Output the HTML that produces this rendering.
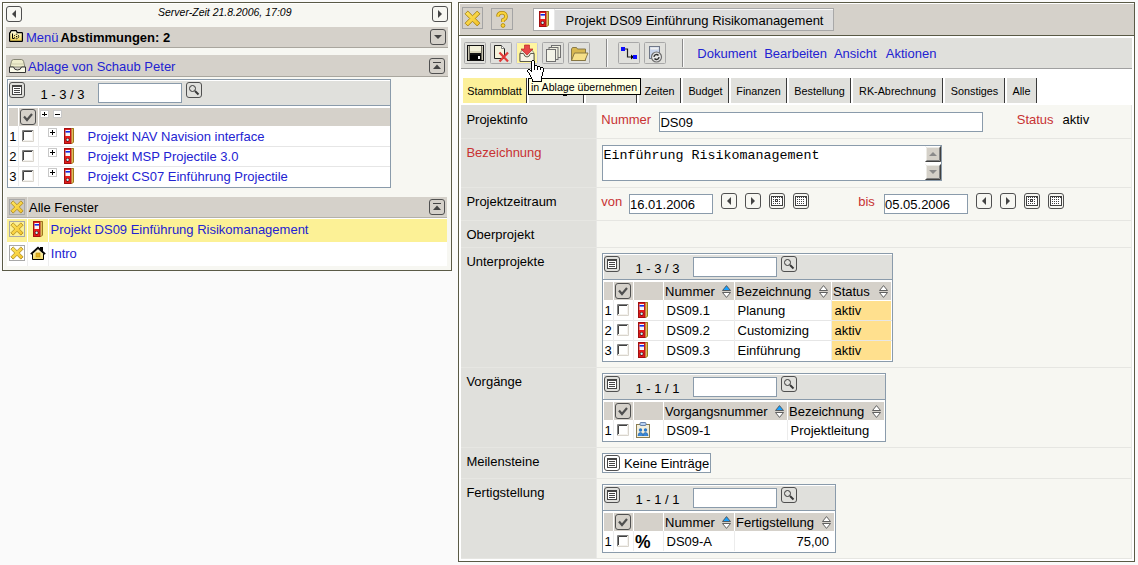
<!DOCTYPE html><html><head><meta charset="utf-8"><style>
html,body{margin:0;padding:0;}
body{width:1138px;height:565px;position:relative;overflow:hidden;background:#fafafa;font-family:"Liberation Sans",sans-serif;}
div{position:absolute;box-sizing:content-box;}
svg{position:absolute;overflow:visible;}
.t{white-space:nowrap;line-height:1;}
.m{white-space:nowrap;line-height:1;font-family:"Liberation Mono",monospace;}
</style></head><body>
<div style="left:2px;top:2px;width:448px;height:267px;border:1px solid #5a5a46;background:#f7f7f2;"></div>
<div style="left:3px;top:3px;width:448px;height:1px;background:#fff"></div>
<div style="left:3px;top:3px;width:1px;height:267px;background:#fff"></div>
<svg style="left:6px;top:6px" width="16" height="16" viewBox="0 0 16 16"><rect x="0.5" y="0.5" width="15" height="15" rx="2.5" ry="2.5" fill="none" stroke="#505050" stroke-width="1"/><path d="M10 4 V12 L6 8 Z" fill="#444"/></svg>
<svg style="left:432px;top:6px" width="16" height="16" viewBox="0 0 16 16"><rect x="0.5" y="0.5" width="15" height="15" rx="2.5" ry="2.5" fill="none" stroke="#505050" stroke-width="1"/><path d="M6 4 V12 L10 8 Z" fill="#444"/></svg>
<div class="t" style="left:158px;top:7px;font-size:10.5px;color:#000;font-style:italic;">Server-Zeit 21.8.2006, 17:09</div>
<div style="left:6px;top:27px;width:442px;height:20px;background:#d5d1ca"></div>
<div style="left:6px;top:47px;width:442px;height:1px;background:#a9a69e"></div>
<svg style="left:9px;top:30px" width="14" height="12" viewBox="0 0 14 12"><defs><linearGradient id="fg" x1="0" y1="0" x2="0" y2="1"><stop offset="0" stop-color="#fffef0"/><stop offset="0.5" stop-color="#fbec98"/><stop offset="1" stop-color="#f0d050"/></linearGradient></defs><path d="M0.6 11 V3.2 Q0.6 2.6 1.2 2.6 L2.2 0.6 H7.2 L8.2 2.6 H12.8 Q13.4 2.6 13.4 3.2 V11 Q13.4 11.4 12.8 11.4 H1.2 Q0.6 11.4 0.6 11 Z" fill="url(#fg)" stroke="#000" stroke-width="1.2"/><path d="M3.5 3.5 V8.5 H5.5" stroke="#000" stroke-width="1" fill="none"/><circle cx="7.5" cy="6.5" r="2.2" fill="none" stroke="#000" stroke-width="1" stroke-dasharray="1.2 1"/><rect x="7" y="6" width="1.2" height="1.2" fill="#000"/></svg>
<div class="t" style="left:26px;top:31px;font-size:13px;color:#2323d2;">Menü</div>
<div class="t" style="left:60.4px;top:31px;font-size:13px;color:#000;font-weight:bold;">Abstimmungen: 2</div>
<svg style="left:430px;top:29px" width="16" height="16" viewBox="0 0 16 16"><rect x="0.5" y="0.5" width="15" height="15" rx="2.5" ry="2.5" fill="none" stroke="#505050" stroke-width="1"/><path d="M4 6 H12 L8 10 Z" fill="#444"/></svg>
<div style="left:6px;top:55px;width:442px;height:21px;background:#d5d1ca"></div>
<div style="left:6px;top:76px;width:442px;height:1px;background:#a9a69e"></div>
<svg style="left:9px;top:58px" width="17" height="15" viewBox="0 0 17 15"><path d="M4.5 1.5 H12.5 Q14 1.5 14.6 3.5 L15.8 9 H1.2 L2.4 3.5 Q3 1.5 4.5 1.5 Z" fill="#efedcc" stroke="#707060" stroke-width="0.8"/><path d="M3 6 H14" stroke="#d8d6b8" stroke-width="1.5"/><path d="M0.5 9 H4.5 Q5.2 12 8.5 12 Q11.8 12 12.5 9 H16.5 V14.5 H0.5 Z" fill="#fbfbea" stroke="#202020" stroke-width="0.9"/></svg>
<div class="t" style="left:28px;top:60px;font-size:13px;color:#2323d2;">Ablage von Schaub Peter</div>
<svg style="left:429px;top:58px" width="16" height="16" viewBox="0 0 16 16"><rect x="0.5" y="0.5" width="15" height="15" rx="2.5" ry="2.5" fill="none" stroke="#505050" stroke-width="1"/><rect x="4" y="4" width="8" height="1" fill="#444"/><path d="M4 11 H12 L8 6.5 Z" fill="#444"/></svg>
<div style="left:7px;top:79px;width:382px;height:107px;border:1px solid #8a9bab;background:#fff;"></div>
<div style="left:8px;top:80px;width:382px;height:25px;background:#e0e0dc"></div>
<div style="left:8px;top:80px;width:382px;height:1px;background:#fff"></div>
<div style="left:8px;top:80px;width:1px;height:25px;background:#fff"></div>
<div style="left:8px;top:105px;width:382px;height:1px;background:#8a9bab"></div>
<svg style="left:9px;top:82px" width="16" height="16" viewBox="0 0 16 16"><rect x="0.5" y="0.5" width="15" height="15" rx="2.5" ry="2.5" fill="none" stroke="#505050" stroke-width="1"/><rect x="3.5" y="3.5" width="9" height="9" fill="#fff" stroke="#444"/><rect x="3" y="3" width="10" height="2" fill="#444"/><path d="M5 6.5 H11 M5 8.5 H11 M5 10.5 H11" stroke="#444" stroke-width="1"/></svg>
<div class="t" style="left:40.5px;top:88px;font-size:13px;color:#000;">1 - 3 / 3</div>
<div style="left:98px;top:83px;width:82px;height:18px;border:1px solid #8a9bab;background:#fff;"></div>
<svg style="left:186px;top:82px" width="16" height="16" viewBox="0 0 16 16"><rect x="0.5" y="0.5" width="15" height="15" rx="2.5" ry="2.5" fill="none" stroke="#505050" stroke-width="1"/><circle cx="6.5" cy="6.5" r="3" fill="none" stroke="#383838" stroke-width="1"/><path d="M9 9 L12.5 12.5" stroke="#383838" stroke-width="2"/></svg>
<div style="left:9px;top:108px;width:9px;height:18px;background:#d5d1ca"></div>
<div style="left:19px;top:108px;width:19px;height:18px;background:#d5d1ca"></div>
<div style="left:39px;top:108px;width:351px;height:18px;background:#d5d1ca"></div>
<svg style="left:20px;top:109px" width="16" height="16" viewBox="0 0 16 16"><rect x="0.5" y="0.5" width="15" height="15" rx="2.5" ry="2.5" fill="none" stroke="#505050" stroke-width="1"/><path d="M4 7.5 L7 11 L12 5" stroke="#505050" stroke-width="2.2" fill="none"/></svg>
<svg style="left:40px;top:110px" width="9" height="8" viewBox="0 0 9 8"><rect x="0.5" y="0.5" width="8" height="7" fill="#fff" stroke="#c8c8c8"/><rect x="2" y="4" width="5" height="1" fill="#000"/><rect x="4" y="2" width="1" height="4" fill="#000"/></svg>
<svg style="left:53px;top:110px" width="9" height="8" viewBox="0 0 9 8"><rect x="0.5" y="0.5" width="8" height="7" fill="#fff" stroke="#c8c8c8"/><rect x="2" y="4" width="5" height="1" fill="#000"/></svg>
<div style="left:18px;top:126px;width:1px;height:20px;background:#ececec"></div>
<div style="left:38px;top:126px;width:1px;height:20px;background:#ececec"></div>
<div class="t" style="left:9.2px;top:130px;font-size:13px;color:#000;">1</div>
<svg style="left:22px;top:130px" width="12" height="12" viewBox="0 0 12 12"><rect x="0" y="0" width="12" height="12" fill="#fff"/><path d="M0.5 12 V0.5 H12" stroke="#808080" stroke-width="1" fill="none"/><path d="M1.5 11 V1.5 H11" stroke="#404040" stroke-width="1" fill="none"/><path d="M11.5 0 V11.5 H0" stroke="#d8d4cc" stroke-width="1" fill="none"/><path d="M10.5 1 V10.5 H1" stroke="#f4f2ee" stroke-width="1" fill="none"/></svg>
<svg style="left:48px;top:128px" width="9" height="9" viewBox="0 0 9 9"><rect x="0.5" y="0.5" width="8" height="8" fill="#fff" stroke="#c8c8c8"/><rect x="2" y="4" width="5" height="1" fill="#000"/><rect x="4" y="2" width="1" height="5" fill="#000"/></svg>
<svg style="left:64px;top:128px" width="10" height="16" viewBox="0 0 10 16"><path d="M7 1 L8 0 H10 V14 L8 16 H7 Z" fill="#d8b44a"/><rect x="7" y="1" width="1" height="14" fill="#f2dc80" shape-rendering="crispEdges"/><rect x="8" y="1" width="1" height="14" fill="#e0c058" shape-rendering="crispEdges"/><path d="M9.5 0.5 V14 L8 15.5" stroke="#9a7a20" stroke-width="1" fill="none"/><path d="M7.5 0.5 H9.5" stroke="#9a7a20" stroke-width="1"/><rect x="0" y="0" width="7" height="16" fill="#e41c1c"/><rect x="0.5" y="0.5" width="6.5" height="15" fill="none" stroke="#a01010" stroke-width="1"/><rect x="1.5" y="2" width="4.5" height="6" fill="#f6f6f6"/><rect x="1.5" y="3" width="4.5" height="1.6" fill="#1428e0"/><circle cx="3.6" cy="11.8" r="1.9" fill="#500"/><circle cx="3.6" cy="11.8" r="1.2" fill="#c8f4fa"/></svg>
<div class="t" style="left:87.6px;top:130px;font-size:13px;color:#2323d2;">Projekt NAV Navision interface</div>
<div style="left:8px;top:146px;width:382px;height:1px;background:#e6e6e6"></div>
<div style="left:18px;top:146px;width:1px;height:20px;background:#ececec"></div>
<div style="left:38px;top:146px;width:1px;height:20px;background:#ececec"></div>
<div class="t" style="left:9.2px;top:150px;font-size:13px;color:#000;">2</div>
<svg style="left:22px;top:150px" width="12" height="12" viewBox="0 0 12 12"><rect x="0" y="0" width="12" height="12" fill="#fff"/><path d="M0.5 12 V0.5 H12" stroke="#808080" stroke-width="1" fill="none"/><path d="M1.5 11 V1.5 H11" stroke="#404040" stroke-width="1" fill="none"/><path d="M11.5 0 V11.5 H0" stroke="#d8d4cc" stroke-width="1" fill="none"/><path d="M10.5 1 V10.5 H1" stroke="#f4f2ee" stroke-width="1" fill="none"/></svg>
<svg style="left:48px;top:148px" width="9" height="9" viewBox="0 0 9 9"><rect x="0.5" y="0.5" width="8" height="8" fill="#fff" stroke="#c8c8c8"/><rect x="2" y="4" width="5" height="1" fill="#000"/><rect x="4" y="2" width="1" height="5" fill="#000"/></svg>
<svg style="left:64px;top:148px" width="10" height="16" viewBox="0 0 10 16"><path d="M7 1 L8 0 H10 V14 L8 16 H7 Z" fill="#d8b44a"/><rect x="7" y="1" width="1" height="14" fill="#f2dc80" shape-rendering="crispEdges"/><rect x="8" y="1" width="1" height="14" fill="#e0c058" shape-rendering="crispEdges"/><path d="M9.5 0.5 V14 L8 15.5" stroke="#9a7a20" stroke-width="1" fill="none"/><path d="M7.5 0.5 H9.5" stroke="#9a7a20" stroke-width="1"/><rect x="0" y="0" width="7" height="16" fill="#e41c1c"/><rect x="0.5" y="0.5" width="6.5" height="15" fill="none" stroke="#a01010" stroke-width="1"/><rect x="1.5" y="2" width="4.5" height="6" fill="#f6f6f6"/><rect x="1.5" y="3" width="4.5" height="1.6" fill="#1428e0"/><circle cx="3.6" cy="11.8" r="1.9" fill="#500"/><circle cx="3.6" cy="11.8" r="1.2" fill="#c8f4fa"/></svg>
<div class="t" style="left:87.6px;top:150px;font-size:13px;color:#2323d2;">Projekt MSP Projectile 3.0</div>
<div style="left:8px;top:166px;width:382px;height:1px;background:#e6e6e6"></div>
<div style="left:18px;top:166px;width:1px;height:20px;background:#ececec"></div>
<div style="left:38px;top:166px;width:1px;height:20px;background:#ececec"></div>
<div class="t" style="left:9.2px;top:170px;font-size:13px;color:#000;">3</div>
<svg style="left:22px;top:170px" width="12" height="12" viewBox="0 0 12 12"><rect x="0" y="0" width="12" height="12" fill="#fff"/><path d="M0.5 12 V0.5 H12" stroke="#808080" stroke-width="1" fill="none"/><path d="M1.5 11 V1.5 H11" stroke="#404040" stroke-width="1" fill="none"/><path d="M11.5 0 V11.5 H0" stroke="#d8d4cc" stroke-width="1" fill="none"/><path d="M10.5 1 V10.5 H1" stroke="#f4f2ee" stroke-width="1" fill="none"/></svg>
<svg style="left:48px;top:168px" width="9" height="9" viewBox="0 0 9 9"><rect x="0.5" y="0.5" width="8" height="8" fill="#fff" stroke="#c8c8c8"/><rect x="2" y="4" width="5" height="1" fill="#000"/><rect x="4" y="2" width="1" height="5" fill="#000"/></svg>
<svg style="left:64px;top:168px" width="10" height="16" viewBox="0 0 10 16"><path d="M7 1 L8 0 H10 V14 L8 16 H7 Z" fill="#d8b44a"/><rect x="7" y="1" width="1" height="14" fill="#f2dc80" shape-rendering="crispEdges"/><rect x="8" y="1" width="1" height="14" fill="#e0c058" shape-rendering="crispEdges"/><path d="M9.5 0.5 V14 L8 15.5" stroke="#9a7a20" stroke-width="1" fill="none"/><path d="M7.5 0.5 H9.5" stroke="#9a7a20" stroke-width="1"/><rect x="0" y="0" width="7" height="16" fill="#e41c1c"/><rect x="0.5" y="0.5" width="6.5" height="15" fill="none" stroke="#a01010" stroke-width="1"/><rect x="1.5" y="2" width="4.5" height="6" fill="#f6f6f6"/><rect x="1.5" y="3" width="4.5" height="1.6" fill="#1428e0"/><circle cx="3.6" cy="11.8" r="1.9" fill="#500"/><circle cx="3.6" cy="11.8" r="1.2" fill="#c8f4fa"/></svg>
<div class="t" style="left:87.6px;top:170px;font-size:13px;color:#2323d2;">Projekt CS07 Einführung Projectile</div>
<div style="left:7px;top:197px;width:440px;height:20px;background:#d5d1ca"></div>
<div style="left:7px;top:217px;width:440px;height:1px;background:#b4b1aa"></div>
<div style="left:7px;top:197px;width:20px;height:20px;background:#cdc9c2"></div>
<div style="left:27px;top:197px;width:1px;height:20px;background:#e6e4e0"></div>
<div style="left:9px;top:199px;width:14px;height:14px;border:1px solid #a8a8a8;background:transparent;"></div>
<svg style="left:10px;top:200px" width="14" height="14" viewBox="0 0 16 16"><defs><linearGradient id="xg10_200" x1="0" y1="0" x2="1" y2="1"><stop offset="0" stop-color="#ffe860"/><stop offset="1" stop-color="#f2c028"/></linearGradient></defs><path d="M1.00 3.60 L3.60 1.00 L8.00 5.40 L12.40 1.00 L15.00 3.60 L10.60 8.00 L15.00 12.40 L12.40 15.00 L8.00 10.60 L3.60 15.00 L1.00 12.40 L5.40 8.00 Z" fill="url(#xg10_200)" stroke="#a88418" stroke-width="0.9" stroke-linejoin="round"/></svg>
<div class="t" style="left:29px;top:201px;font-size:13px;color:#000;">Alle Fenster</div>
<svg style="left:429px;top:199px" width="16" height="16" viewBox="0 0 16 16"><rect x="0.5" y="0.5" width="15" height="15" rx="2.5" ry="2.5" fill="none" stroke="#505050" stroke-width="1"/><rect x="4" y="4" width="8" height="1" fill="#444"/><path d="M4 11 H12 L8 6.5 Z" fill="#444"/></svg>
<div style="left:7px;top:218px;width:440px;height:1px;background:#fff"></div>
<div style="left:7px;top:219px;width:440px;height:23px;background:#fcf196"></div>
<div style="left:27px;top:219px;width:1px;height:23px;background:#fff"></div>
<div style="left:48px;top:219px;width:1px;height:23px;background:#fff"></div>
<div style="left:9px;top:221px;width:14px;height:14px;border:1px solid #a8a8a8;background:transparent;"></div>
<svg style="left:10px;top:222px" width="14" height="14" viewBox="0 0 16 16"><defs><linearGradient id="xg10_222" x1="0" y1="0" x2="1" y2="1"><stop offset="0" stop-color="#ffe860"/><stop offset="1" stop-color="#f2c028"/></linearGradient></defs><path d="M1.00 3.60 L3.60 1.00 L8.00 5.40 L12.40 1.00 L15.00 3.60 L10.60 8.00 L15.00 12.40 L12.40 15.00 L8.00 10.60 L3.60 15.00 L1.00 12.40 L5.40 8.00 Z" fill="url(#xg10_222)" stroke="#a88418" stroke-width="0.9" stroke-linejoin="round"/></svg>
<svg style="left:33px;top:221px" width="10" height="16" viewBox="0 0 10 16"><path d="M7 1 L8 0 H10 V14 L8 16 H7 Z" fill="#d8b44a"/><rect x="7" y="1" width="1" height="14" fill="#f2dc80" shape-rendering="crispEdges"/><rect x="8" y="1" width="1" height="14" fill="#e0c058" shape-rendering="crispEdges"/><path d="M9.5 0.5 V14 L8 15.5" stroke="#9a7a20" stroke-width="1" fill="none"/><path d="M7.5 0.5 H9.5" stroke="#9a7a20" stroke-width="1"/><rect x="0" y="0" width="7" height="16" fill="#e41c1c"/><rect x="0.5" y="0.5" width="6.5" height="15" fill="none" stroke="#a01010" stroke-width="1"/><rect x="1.5" y="2" width="4.5" height="6" fill="#f6f6f6"/><rect x="1.5" y="3" width="4.5" height="1.6" fill="#1428e0"/><circle cx="3.6" cy="11.8" r="1.9" fill="#500"/><circle cx="3.6" cy="11.8" r="1.2" fill="#c8f4fa"/></svg>
<div class="t" style="left:50.5px;top:223px;font-size:13px;color:#2323d2;">Projekt DS09 Einführung Risikomanagement</div>
<div style="left:7px;top:242px;width:440px;height:24px;background:#fff"></div>
<div style="left:27px;top:242px;width:1px;height:24px;background:#eeeeee"></div>
<div style="left:48px;top:242px;width:1px;height:24px;background:#eeeeee"></div>
<div style="left:9px;top:245px;width:14px;height:14px;border:1px solid #a8a8a8;background:transparent;"></div>
<svg style="left:10px;top:246px" width="14" height="14" viewBox="0 0 16 16"><defs><linearGradient id="xg10_246" x1="0" y1="0" x2="1" y2="1"><stop offset="0" stop-color="#ffe860"/><stop offset="1" stop-color="#f2c028"/></linearGradient></defs><path d="M1.00 3.60 L3.60 1.00 L8.00 5.40 L12.40 1.00 L15.00 3.60 L10.60 8.00 L15.00 12.40 L12.40 15.00 L8.00 10.60 L3.60 15.00 L1.00 12.40 L5.40 8.00 Z" fill="url(#xg10_246)" stroke="#a88418" stroke-width="0.9" stroke-linejoin="round"/></svg>
<svg style="left:30px;top:246px" width="16" height="14" viewBox="0 0 16 14"><path d="M10 1 H13 V6 H10 Z" fill="#000"/><path d="M2.5 13.5 V7.5 L8 2.5 L13.5 7.5 V13.5 Z" fill="url(#hg)" stroke="#000" stroke-width="1"/><defs><linearGradient id="hg" x1="0" y1="0" x2="0" y2="1"><stop offset="0" stop-color="#fffbe0"/><stop offset="1" stop-color="#f0d860"/></linearGradient></defs><path d="M0.8 8.2 L8 1.5 L15.2 8.2" stroke="#000" stroke-width="1.6" fill="none"/><rect x="6" y="7" width="4" height="4" fill="#e0b020" stroke="#c09010" stroke-width="0.6"/></svg>
<div class="t" style="left:50.8px;top:247px;font-size:13px;color:#2323d2;">Intro</div>
<div style="left:458px;top:2px;width:675px;height:558px;border:1px solid #5a5a46;background:#fff;"></div>
<div style="left:460px;top:4px;width:674px;height:31px;background:#d5d1ca"></div>
<div style="left:459px;top:35px;width:675px;height:1px;background:#5a5a46"></div>
<div style="left:462px;top:7px;width:19px;height:20px;border:1px solid #a4a4a4;background:transparent;"></div>
<svg style="left:464px;top:10px" width="17" height="17" viewBox="0 0 16 16"><defs><linearGradient id="xg464_10" x1="0" y1="0" x2="1" y2="1"><stop offset="0" stop-color="#ffe860"/><stop offset="1" stop-color="#f2c028"/></linearGradient></defs><path d="M1.00 3.60 L3.60 1.00 L8.00 5.40 L12.40 1.00 L15.00 3.60 L10.60 8.00 L15.00 12.40 L12.40 15.00 L8.00 10.60 L3.60 15.00 L1.00 12.40 L5.40 8.00 Z" fill="url(#xg464_10)" stroke="#a88418" stroke-width="0.9" stroke-linejoin="round"/></svg>
<div style="left:491px;top:8px;width:20px;height:20px;border:1px solid #a4a4a4;background:transparent;"></div>
<svg style="left:495px;top:11px" width="14" height="17" viewBox="0 0 14 17"><path d="M3 5.5 Q3 1.8 7 1.8 Q11 1.8 11 5.5 Q11 8 8 9 V11" stroke="#b08a10" stroke-width="3.6" fill="none"/><path d="M3 5.5 Q3 1.8 7 1.8 Q11 1.8 11 5.5 Q11 8 8 9 V11" stroke="#fad43c" stroke-width="2" fill="none"/><circle cx="8" cy="14.5" r="1.9" fill="#fad43c" stroke="#b08a10" stroke-width="0.9"/></svg>
<div style="left:533px;top:8px;width:299px;height:21px;border:1px solid #a8a8a8;background:#dcdcdc;"></div>
<div style="left:534px;top:9px;width:20px;height:21px;background:#fff"></div>
<div style="left:554px;top:9px;width:1px;height:21px;background:#e8e8e8"></div>
<div style="left:555px;top:9px;width:278px;height:1px;background:#fafafa"></div>
<svg style="left:539px;top:11px" width="10" height="16" viewBox="0 0 10 16"><path d="M7 1 L8 0 H10 V14 L8 16 H7 Z" fill="#d8b44a"/><rect x="7" y="1" width="1" height="14" fill="#f2dc80" shape-rendering="crispEdges"/><rect x="8" y="1" width="1" height="14" fill="#e0c058" shape-rendering="crispEdges"/><path d="M9.5 0.5 V14 L8 15.5" stroke="#9a7a20" stroke-width="1" fill="none"/><path d="M7.5 0.5 H9.5" stroke="#9a7a20" stroke-width="1"/><rect x="0" y="0" width="7" height="16" fill="#e41c1c"/><rect x="0.5" y="0.5" width="6.5" height="15" fill="none" stroke="#a01010" stroke-width="1"/><rect x="1.5" y="2" width="4.5" height="6" fill="#f6f6f6"/><rect x="1.5" y="3" width="4.5" height="1.6" fill="#1428e0"/><circle cx="3.6" cy="11.8" r="1.9" fill="#500"/><circle cx="3.6" cy="11.8" r="1.2" fill="#c8f4fa"/></svg>
<div class="t" style="left:565.5px;top:14px;font-size:13px;color:#000;">Projekt DS09 Einführung Risikomanagement</div>
<div style="left:461px;top:38px;width:671px;height:30px;background:#e0e0dc"></div>
<div style="left:461px;top:68px;width:671px;height:1px;background:#a0a0a0"></div>
<svg style="left:464px;top:42px" width="22" height="22" viewBox="0 0 22 22"><rect x="0.5" y="0.5" width="21" height="21" rx="1" fill="none" stroke="#a8a8a8"/></svg>
<svg style="left:490px;top:42px" width="22" height="22" viewBox="0 0 22 22"><rect x="0.5" y="0.5" width="21" height="21" rx="1" fill="none" stroke="#a8a8a8"/></svg>
<svg style="left:542px;top:42px" width="22" height="22" viewBox="0 0 22 22"><rect x="0.5" y="0.5" width="21" height="21" rx="1" fill="none" stroke="#a8a8a8"/></svg>
<svg style="left:568px;top:42px" width="22" height="22" viewBox="0 0 22 22"><rect x="0.5" y="0.5" width="21" height="21" rx="1" fill="none" stroke="#a8a8a8"/></svg>
<svg style="left:618px;top:42px" width="22" height="22" viewBox="0 0 22 22"><rect x="0.5" y="0.5" width="21" height="21" rx="1" fill="none" stroke="#a8a8a8"/></svg>
<svg style="left:644px;top:42px" width="22" height="22" viewBox="0 0 22 22"><rect x="0.5" y="0.5" width="21" height="21" rx="1" fill="none" stroke="#a8a8a8"/></svg>
<svg style="left:516px;top:42px" width="22" height="22" viewBox="0 0 22 22"><rect x="0.5" y="0.5" width="21" height="21" rx="1" fill="#fff5a0" stroke="#c8c8d8"/></svg>
<svg style="left:467px;top:45px" width="17" height="16" viewBox="0 0 17 16"><path d="M0 0 H17 V16 H0 Z" fill="#111"/><rect x="3" y="1" width="11" height="7" fill="#f2f0d8"/><rect x="3" y="6" width="11" height="2" fill="#d8d4b8"/><rect x="1" y="1" width="1.5" height="14" fill="#c8c4b0"/><rect x="14.5" y="1" width="1.5" height="14" fill="#c8c4b0"/><rect x="3" y="10" width="11" height="5" fill="#000"/><rect x="11" y="11" width="2" height="3" fill="#f0f0f0"/><rect x="15" y="1" width="1" height="1" fill="#ddd"/></svg>
<svg style="left:493px;top:45px" width="17" height="18" viewBox="0 0 17 18"><path d="M1.5 0.5 H8.5 L11.5 3.5 V13.5 H1.5 Z" fill="#f4f2dc" stroke="#202020" stroke-width="1"/><path d="M8.5 0.5 V3.5 H11.5" fill="#fff" stroke="#606060" stroke-width="0.8"/><path d="M6.5 7.5 L15 16.5 M15 7.5 L6.5 16.5" stroke="#e03a3a" stroke-width="2.2"/></svg>
<svg style="left:518px;top:44px" width="18" height="18" viewBox="0 0 18 18"><path d="M4 6 H14 L16 9 V17.5 H2 V9 Z" fill="#e8e6d4" stroke="#808070" stroke-width="0.8"/><path d="M2 9.5 H5.5 Q6.5 13 9 13 Q11.5 13 12.5 9.5 H16 V17.5 H2 Z" fill="#f6f4e6" stroke="#505040" stroke-width="0.9"/><path d="M6.5 1 H11.5 V5 H15 L9 11 L3 5 H6.5 Z" fill="#e84848" stroke="#b82828" stroke-width="0.7"/></svg>
<svg style="left:545px;top:45px" width="17" height="17" viewBox="0 0 17 17"><rect x="6.5" y="0.5" width="9" height="12" fill="#eeeee0" stroke="#707070"/><rect x="4" y="2.5" width="9" height="12" fill="#eeeee0" stroke="#707070"/><rect x="1.5" y="4.5" width="9" height="12" fill="#f4f4e8" stroke="#707070"/></svg>
<svg style="left:570px;top:46px" width="19" height="16" viewBox="0 0 19 16"><path d="M1.5 3 L2.5 1.5 H6.5 L7.5 3 H15.5 V14.5 H1.5 Z" fill="#d8b850" stroke="#807040" stroke-width="0.9"/><path d="M1.5 14.5 L4.5 7 H18 L15 14.5 Z" fill="#f6e088" stroke="#807040" stroke-width="0.9"/></svg>
<div style="left:606px;top:39px;width:1px;height:28px;background:#8a8a8a"></div>
<div style="left:607px;top:39px;width:1px;height:28px;background:#fafafa"></div>
<svg style="left:620px;top:45px" width="18" height="16" viewBox="0 0 18 16"><rect x="1" y="2" width="4" height="4" fill="#0a0aff"/><path d="M5 4 H7.5 V12 H12" stroke="#202020" stroke-width="1.2" fill="none"/><path d="M11 9.5 L14 12 L11 14.5 Z" fill="#000"/><rect x="13" y="10" width="4" height="4" fill="#0a0aff"/></svg>
<svg style="left:647px;top:45px" width="17" height="18" viewBox="0 0 17 18"><rect x="2.5" y="1.5" width="10" height="12" fill="#c8d4ec" stroke="#707888" stroke-width="1"/><rect x="3.5" y="2.5" width="8" height="2" fill="#f0f0f0"/><circle cx="9.5" cy="12" r="5" fill="#e8e8e8" stroke="#707070" stroke-width="1.2"/><path d="M7 12 A2.5 2.5 0 0 1 11.5 10.5 M12 12 A2.5 2.5 0 0 1 7.5 13.5" stroke="#303030" stroke-width="1.3" fill="none"/></svg>
<div style="left:682px;top:39px;width:1px;height:28px;background:#8a8a8a"></div>
<div style="left:683px;top:39px;width:1px;height:28px;background:#fafafa"></div>
<div class="t" style="left:697.3px;top:47px;font-size:13px;color:#2323d2;">Dokument</div>
<div class="t" style="left:764.2px;top:47px;font-size:13px;color:#2323d2;">Bearbeiten</div>
<div class="t" style="left:833.9px;top:47px;font-size:13px;color:#2323d2;">Ansicht</div>
<div class="t" style="left:885.8px;top:47px;font-size:13px;color:#2323d2;">Aktionen</div>
<div style="left:463px;top:78px;width:63px;height:25px;background:#fcf09a"></div>
<div style="left:526px;top:78px;width:1px;height:25px;background:#3a3a3a"></div>
<div class="t" style="left:463px;width:63px;text-align:center;top:85.66px;font-size:10.8px;">Stammblatt</div>
<div style="left:529px;top:78px;width:54px;height:25px;background:#e0e0dc"></div>
<div style="left:583px;top:78px;width:1px;height:25px;background:#3a3a3a"></div>
<div class="t" style="left:529px;width:54px;text-align:center;top:85.66px;font-size:10.8px;"></div>
<div style="left:586px;top:78px;width:50px;height:25px;background:#e0e0dc"></div>
<div style="left:636px;top:78px;width:1px;height:25px;background:#3a3a3a"></div>
<div class="t" style="left:586px;width:50px;text-align:center;top:85.66px;font-size:10.8px;"></div>
<div style="left:639px;top:78px;width:41px;height:25px;background:#e0e0dc"></div>
<div style="left:680px;top:78px;width:1px;height:25px;background:#3a3a3a"></div>
<div class="t" style="left:639px;width:41px;text-align:center;top:85.66px;font-size:10.8px;">Zeiten</div>
<div style="left:683px;top:78px;width:45px;height:25px;background:#e0e0dc"></div>
<div style="left:728px;top:78px;width:1px;height:25px;background:#3a3a3a"></div>
<div class="t" style="left:683px;width:45px;text-align:center;top:85.66px;font-size:10.8px;">Budget</div>
<div style="left:731px;top:78px;width:55px;height:25px;background:#e0e0dc"></div>
<div style="left:786px;top:78px;width:1px;height:25px;background:#3a3a3a"></div>
<div class="t" style="left:731px;width:55px;text-align:center;top:85.66px;font-size:10.8px;">Finanzen</div>
<div style="left:789px;top:78px;width:61px;height:25px;background:#e0e0dc"></div>
<div style="left:850px;top:78px;width:1px;height:25px;background:#3a3a3a"></div>
<div class="t" style="left:789px;width:61px;text-align:center;top:85.66px;font-size:10.8px;">Bestellung</div>
<div style="left:853px;top:78px;width:89px;height:25px;background:#e0e0dc"></div>
<div style="left:942px;top:78px;width:1px;height:25px;background:#3a3a3a"></div>
<div class="t" style="left:853px;width:89px;text-align:center;top:85.66px;font-size:10.8px;">RK-Abrechnung</div>
<div style="left:945px;top:78px;width:59px;height:25px;background:#e0e0dc"></div>
<div style="left:1004px;top:78px;width:1px;height:25px;background:#3a3a3a"></div>
<div class="t" style="left:945px;width:59px;text-align:center;top:85.66px;font-size:10.8px;">Sonstiges</div>
<div style="left:1007px;top:78px;width:29px;height:25px;background:#e0e0dc"></div>
<div style="left:1036px;top:78px;width:1px;height:25px;background:#3a3a3a"></div>
<div class="t" style="left:1007px;width:29px;text-align:center;top:85.66px;font-size:10.8px;">Alle</div>
<div style="left:461px;top:105px;width:671px;height:454px;background:#f7f7f2"></div>
<div style="left:461px;top:105px;width:135px;height:454px;background:#e0e0dc"></div>
<div style="left:596px;top:105px;width:1px;height:454px;background:#e8e8e6"></div>
<div style="left:1131px;top:105px;width:1px;height:454px;background:#e6e6e2"></div>
<div style="left:461px;top:558px;width:671px;height:1px;background:#e6e6e2"></div>
<div style="left:461px;top:138px;width:671px;height:1px;background:#e6e6e2"></div>
<div style="left:461px;top:187px;width:671px;height:1px;background:#e6e6e2"></div>
<div style="left:461px;top:220px;width:671px;height:1px;background:#e6e6e2"></div>
<div style="left:461px;top:247px;width:671px;height:1px;background:#e6e6e2"></div>
<div style="left:461px;top:367px;width:671px;height:1px;background:#e6e6e2"></div>
<div style="left:461px;top:447px;width:671px;height:1px;background:#e6e6e2"></div>
<div style="left:461px;top:478px;width:671px;height:1px;background:#e6e6e2"></div>
<div class="t" style="left:466.4px;top:113px;font-size:13px;color:#000;">Projektinfo</div>
<div class="t" style="left:601.3px;top:113px;font-size:13px;color:#c83232;">Nummer</div>
<div style="left:659px;top:112px;width:322px;height:18px;border:1px solid #8a9bab;background:#fff;"></div>
<div class="t" style="left:660.4px;top:116px;font-size:13px;color:#000;">DS09</div>
<div class="t" style="left:1016.75px;top:113px;font-size:13px;color:#c83232;">Status</div>
<div class="t" style="left:1062.5px;top:113px;font-size:13px;color:#000;">aktiv</div>
<div class="t" style="left:466.4px;top:146px;font-size:13px;color:#c83232;">Bezeichnung</div>
<div style="left:602px;top:145px;width:338px;height:34px;border:1px solid #8a9bab;background:#fff;"></div>
<div class="m" style="left:603.6px;top:149px;font-size:13.33px;">Einführung Risikomanagement</div>
<svg style="left:925px;top:146px" width="16" height="16" viewBox="0 0 16 16"><rect x="0" y="0" width="16" height="16" fill="#d4d0c8"/><path d="M0.5 15.5 V0.5 H15.5" stroke="#fff" fill="none"/><path d="M15.5 0.5 V15.5 H0.5" stroke="#404040" fill="none"/><path d="M1.5 14.5 V1.5 H14.5" stroke="#ecebe6" fill="none"/><path d="M14.5 1.5 V14.5 H1.5" stroke="#808080" fill="none"/><path d="M4 10 H12 L8 6 Z" fill="#8a8a8a"/></svg>
<svg style="left:925px;top:164px" width="16" height="16" viewBox="0 0 16 16"><rect x="0" y="0" width="16" height="16" fill="#d4d0c8"/><path d="M0.5 15.5 V0.5 H15.5" stroke="#fff" fill="none"/><path d="M15.5 0.5 V15.5 H0.5" stroke="#404040" fill="none"/><path d="M1.5 14.5 V1.5 H14.5" stroke="#ecebe6" fill="none"/><path d="M14.5 1.5 V14.5 H1.5" stroke="#808080" fill="none"/><path d="M4 6 H12 L8 10 Z" fill="#8a8a8a"/></svg>
<div class="t" style="left:466.4px;top:195px;font-size:13px;color:#000;">Projektzeitraum</div>
<div class="t" style="left:601.3px;top:195px;font-size:13px;color:#c83232;">von</div>
<div style="left:629px;top:194px;width:82px;height:18px;border:1px solid #8a9bab;background:#fff;"></div>
<div class="t" style="left:630px;top:198px;font-size:13px;color:#000;">16.01.2006</div>
<svg style="left:721px;top:193px" width="16" height="16" viewBox="0 0 16 16"><rect x="0.5" y="0.5" width="15" height="15" rx="2.5" ry="2.5" fill="none" stroke="#505050" stroke-width="1"/><path d="M10 4 V12 L6 8 Z" fill="#444"/></svg>
<svg style="left:745px;top:193px" width="16" height="16" viewBox="0 0 16 16"><rect x="0.5" y="0.5" width="15" height="15" rx="2.5" ry="2.5" fill="none" stroke="#505050" stroke-width="1"/><path d="M6 4 V12 L10 8 Z" fill="#444"/></svg>
<svg style="left:769px;top:193px" width="16" height="16" viewBox="0 0 16 16"><rect x="0.5" y="0.5" width="15" height="15" rx="2.5" ry="2.5" fill="none" stroke="#505050" stroke-width="1"/><path d="M0 0h12v1h-12zM0 1h1v1h-1zM2 1h1v1h-1zM4 1h1v1h-1zM6 1h1v1h-1zM8 1h1v1h-1zM10 1h2v1h-2zM0 2h1v1h-1zM11 2h1v1h-1zM0 3h1v1h-1zM2 3h1v1h-1zM4 3h3v1h-3zM8 3h1v1h-1zM11 3h1v1h-1zM0 4h1v1h-1zM4 4h1v1h-1zM6 4h1v1h-1zM11 4h1v1h-1zM0 5h1v1h-1zM2 5h1v1h-1zM4 5h3v1h-3zM8 5h1v1h-1zM11 5h1v1h-1zM0 6h1v1h-1zM11 6h1v1h-1zM0 7h1v1h-1zM2 7h1v1h-1zM4 7h1v1h-1zM6 7h1v1h-1zM8 7h1v1h-1zM11 7h1v1h-1zM0 8h1v1h-1zM11 8h1v1h-1zM0 9h12v1h-12z" transform="translate(2,3)" fill="#404040" shape-rendering="crispEdges"/><path d="M1 1h1v1h-1zM3 1h1v1h-1zM5 1h1v1h-1zM7 1h1v1h-1zM9 1h1v1h-1zM1 2h10v1h-10zM1 3h1v1h-1zM3 3h1v1h-1zM7 3h1v1h-1zM9 3h2v1h-2zM1 4h3v1h-3zM5 4h1v1h-1zM7 4h4v1h-4zM1 5h1v1h-1zM3 5h1v1h-1zM7 5h1v1h-1zM9 5h2v1h-2zM1 6h10v1h-10zM1 7h1v1h-1zM3 7h1v1h-1zM5 7h1v1h-1zM7 7h1v1h-1zM9 7h2v1h-2zM1 8h10v1h-10z" transform="translate(2,3)" fill="#fff" shape-rendering="crispEdges"/></svg>
<svg style="left:793px;top:193px" width="16" height="16" viewBox="0 0 16 16"><rect x="0.5" y="0.5" width="15" height="15" rx="2.5" ry="2.5" fill="none" stroke="#505050" stroke-width="1"/><path d="M0 0h12v1h-12zM0 1h1v1h-1zM2 1h1v1h-1zM4 1h1v1h-1zM6 1h1v1h-1zM8 1h1v1h-1zM10 1h2v1h-2zM0 2h1v1h-1zM11 2h1v1h-1zM0 3h1v1h-1zM2 3h1v1h-1zM4 3h1v1h-1zM6 3h1v1h-1zM8 3h1v1h-1zM11 3h1v1h-1zM0 4h1v1h-1zM11 4h1v1h-1zM0 5h1v1h-1zM2 5h1v1h-1zM4 5h1v1h-1zM6 5h1v1h-1zM8 5h1v1h-1zM11 5h1v1h-1zM0 6h1v1h-1zM11 6h1v1h-1zM0 7h1v1h-1zM2 7h1v1h-1zM4 7h1v1h-1zM6 7h1v1h-1zM8 7h1v1h-1zM11 7h1v1h-1zM0 8h1v1h-1zM11 8h1v1h-1zM0 9h12v1h-12z" transform="translate(2,3)" fill="#404040" shape-rendering="crispEdges"/><path d="M1 1h1v1h-1zM3 1h1v1h-1zM5 1h1v1h-1zM7 1h1v1h-1zM9 1h1v1h-1zM1 2h10v1h-10zM1 3h1v1h-1zM3 3h1v1h-1zM5 3h1v1h-1zM7 3h1v1h-1zM9 3h2v1h-2zM1 4h10v1h-10zM1 5h1v1h-1zM3 5h1v1h-1zM5 5h1v1h-1zM7 5h1v1h-1zM9 5h2v1h-2zM1 6h10v1h-10zM1 7h1v1h-1zM3 7h1v1h-1zM5 7h1v1h-1zM7 7h1v1h-1zM9 7h2v1h-2zM1 8h10v1h-10z" transform="translate(2,3)" fill="#fff" shape-rendering="crispEdges"/></svg>
<div class="t" style="left:858.2px;top:195px;font-size:13px;color:#c83232;">bis</div>
<div style="left:884px;top:194px;width:82px;height:18px;border:1px solid #8a9bab;background:#fff;"></div>
<div class="t" style="left:885px;top:198px;font-size:13px;color:#000;">05.05.2006</div>
<svg style="left:976px;top:193px" width="16" height="16" viewBox="0 0 16 16"><rect x="0.5" y="0.5" width="15" height="15" rx="2.5" ry="2.5" fill="none" stroke="#505050" stroke-width="1"/><path d="M10 4 V12 L6 8 Z" fill="#444"/></svg>
<svg style="left:1000px;top:193px" width="16" height="16" viewBox="0 0 16 16"><rect x="0.5" y="0.5" width="15" height="15" rx="2.5" ry="2.5" fill="none" stroke="#505050" stroke-width="1"/><path d="M6 4 V12 L10 8 Z" fill="#444"/></svg>
<svg style="left:1024px;top:193px" width="16" height="16" viewBox="0 0 16 16"><rect x="0.5" y="0.5" width="15" height="15" rx="2.5" ry="2.5" fill="none" stroke="#505050" stroke-width="1"/><path d="M0 0h12v1h-12zM0 1h1v1h-1zM2 1h1v1h-1zM4 1h1v1h-1zM6 1h1v1h-1zM8 1h1v1h-1zM10 1h2v1h-2zM0 2h1v1h-1zM11 2h1v1h-1zM0 3h1v1h-1zM2 3h1v1h-1zM4 3h3v1h-3zM8 3h1v1h-1zM11 3h1v1h-1zM0 4h1v1h-1zM4 4h1v1h-1zM6 4h1v1h-1zM11 4h1v1h-1zM0 5h1v1h-1zM2 5h1v1h-1zM4 5h3v1h-3zM8 5h1v1h-1zM11 5h1v1h-1zM0 6h1v1h-1zM11 6h1v1h-1zM0 7h1v1h-1zM2 7h1v1h-1zM4 7h1v1h-1zM6 7h1v1h-1zM8 7h1v1h-1zM11 7h1v1h-1zM0 8h1v1h-1zM11 8h1v1h-1zM0 9h12v1h-12z" transform="translate(2,3)" fill="#404040" shape-rendering="crispEdges"/><path d="M1 1h1v1h-1zM3 1h1v1h-1zM5 1h1v1h-1zM7 1h1v1h-1zM9 1h1v1h-1zM1 2h10v1h-10zM1 3h1v1h-1zM3 3h1v1h-1zM7 3h1v1h-1zM9 3h2v1h-2zM1 4h3v1h-3zM5 4h1v1h-1zM7 4h4v1h-4zM1 5h1v1h-1zM3 5h1v1h-1zM7 5h1v1h-1zM9 5h2v1h-2zM1 6h10v1h-10zM1 7h1v1h-1zM3 7h1v1h-1zM5 7h1v1h-1zM7 7h1v1h-1zM9 7h2v1h-2zM1 8h10v1h-10z" transform="translate(2,3)" fill="#fff" shape-rendering="crispEdges"/></svg>
<svg style="left:1048px;top:193px" width="16" height="16" viewBox="0 0 16 16"><rect x="0.5" y="0.5" width="15" height="15" rx="2.5" ry="2.5" fill="none" stroke="#505050" stroke-width="1"/><path d="M0 0h12v1h-12zM0 1h1v1h-1zM2 1h1v1h-1zM4 1h1v1h-1zM6 1h1v1h-1zM8 1h1v1h-1zM10 1h2v1h-2zM0 2h1v1h-1zM11 2h1v1h-1zM0 3h1v1h-1zM2 3h1v1h-1zM4 3h1v1h-1zM6 3h1v1h-1zM8 3h1v1h-1zM11 3h1v1h-1zM0 4h1v1h-1zM11 4h1v1h-1zM0 5h1v1h-1zM2 5h1v1h-1zM4 5h1v1h-1zM6 5h1v1h-1zM8 5h1v1h-1zM11 5h1v1h-1zM0 6h1v1h-1zM11 6h1v1h-1zM0 7h1v1h-1zM2 7h1v1h-1zM4 7h1v1h-1zM6 7h1v1h-1zM8 7h1v1h-1zM11 7h1v1h-1zM0 8h1v1h-1zM11 8h1v1h-1zM0 9h12v1h-12z" transform="translate(2,3)" fill="#404040" shape-rendering="crispEdges"/><path d="M1 1h1v1h-1zM3 1h1v1h-1zM5 1h1v1h-1zM7 1h1v1h-1zM9 1h1v1h-1zM1 2h10v1h-10zM1 3h1v1h-1zM3 3h1v1h-1zM5 3h1v1h-1zM7 3h1v1h-1zM9 3h2v1h-2zM1 4h10v1h-10zM1 5h1v1h-1zM3 5h1v1h-1zM5 5h1v1h-1zM7 5h1v1h-1zM9 5h2v1h-2zM1 6h10v1h-10zM1 7h1v1h-1zM3 7h1v1h-1zM5 7h1v1h-1zM7 7h1v1h-1zM9 7h2v1h-2zM1 8h10v1h-10z" transform="translate(2,3)" fill="#fff" shape-rendering="crispEdges"/></svg>
<div class="t" style="left:466.4px;top:228px;font-size:13px;color:#000;">Oberprojekt</div>
<div class="t" style="left:466.4px;top:255px;font-size:13px;color:#000;">Unterprojekte</div>
<div style="left:602px;top:253px;width:289px;height:107px;border:1px solid #8a9bab;background:#fff;"></div>
<div style="left:603px;top:254px;width:289px;height:25px;background:#e0e0dc"></div>
<div style="left:603px;top:254px;width:289px;height:1px;background:#fff"></div>
<div style="left:603px;top:254px;width:1px;height:25px;background:#fff"></div>
<div style="left:603px;top:279px;width:289px;height:1px;background:#8a9bab"></div>
<svg style="left:604px;top:256px" width="16" height="16" viewBox="0 0 16 16"><rect x="0.5" y="0.5" width="15" height="15" rx="2.5" ry="2.5" fill="none" stroke="#505050" stroke-width="1"/><rect x="3.5" y="3.5" width="9" height="9" fill="#fff" stroke="#444"/><rect x="3" y="3" width="10" height="2" fill="#444"/><path d="M5 6.5 H11 M5 8.5 H11 M5 10.5 H11" stroke="#444" stroke-width="1"/></svg>
<div class="t" style="left:635.5px;top:262px;font-size:13px;color:#000;">1 - 3 / 3</div>
<div style="left:693px;top:257px;width:82px;height:18px;border:1px solid #8a9bab;background:#fff;"></div>
<svg style="left:781px;top:256px" width="16" height="16" viewBox="0 0 16 16"><rect x="0.5" y="0.5" width="15" height="15" rx="2.5" ry="2.5" fill="none" stroke="#505050" stroke-width="1"/><circle cx="6.5" cy="6.5" r="3" fill="none" stroke="#383838" stroke-width="1"/><path d="M9 9 L12.5 12.5" stroke="#383838" stroke-width="2"/></svg>
<div style="left:604px;top:282px;width:9px;height:18px;background:#d5d1ca"></div>
<div style="left:614px;top:282px;width:19px;height:18px;background:#d5d1ca"></div>
<div style="left:634px;top:282px;width:29px;height:18px;background:#d5d1ca"></div>
<svg style="left:615px;top:283px" width="16" height="16" viewBox="0 0 16 16"><rect x="0.5" y="0.5" width="15" height="15" rx="2.5" ry="2.5" fill="none" stroke="#505050" stroke-width="1"/><path d="M4 7.5 L7 11 L12 5" stroke="#505050" stroke-width="2.2" fill="none"/></svg>
<div style="left:664px;top:282px;width:70px;height:18px;background:#d5d1ca"></div>
<div class="t" style="left:665px;top:285px;font-size:13px;color:#000;">Nummer</div>
<svg style="left:722px;top:285px" width="9" height="13" viewBox="0 0 9 13"><path d="M4.5 0.6 L8.5 5.5 H0.5 Z" fill="#18a0ff" stroke="#505050" stroke-width="0.9" stroke-linejoin="round"/><path d="M4.5 12.4 L8.5 7.5 H0.5 Z" fill="#fff" stroke="#505050" stroke-width="0.9" stroke-linejoin="round"/></svg>
<div style="left:735px;top:282px;width:96px;height:18px;background:#d5d1ca"></div>
<div class="t" style="left:736px;top:285px;font-size:13px;color:#000;">Bezeichnung</div>
<svg style="left:819px;top:285px" width="9" height="13" viewBox="0 0 9 13"><path d="M4.5 0.6 L8.5 5.5 H0.5 Z" fill="#fff" stroke="#505050" stroke-width="0.9" stroke-linejoin="round"/><path d="M4.5 12.4 L8.5 7.5 H0.5 Z" fill="#fff" stroke="#505050" stroke-width="0.9" stroke-linejoin="round"/></svg>
<div style="left:832px;top:282px;width:59px;height:18px;background:#d5d1ca"></div>
<div class="t" style="left:833px;top:285px;font-size:13px;color:#000;">Status</div>
<svg style="left:879px;top:285px" width="9" height="13" viewBox="0 0 9 13"><path d="M4.5 0.6 L8.5 5.5 H0.5 Z" fill="#fff" stroke="#505050" stroke-width="0.9" stroke-linejoin="round"/><path d="M4.5 12.4 L8.5 7.5 H0.5 Z" fill="#fff" stroke="#505050" stroke-width="0.9" stroke-linejoin="round"/></svg>
<div style="left:613px;top:300px;width:1px;height:20px;background:#ececec"></div>
<div style="left:633px;top:300px;width:1px;height:20px;background:#ececec"></div>
<div style="left:663px;top:300px;width:1px;height:20px;background:#ececec"></div>
<div style="left:734px;top:300px;width:1px;height:20px;background:#ececec"></div>
<div style="left:831px;top:300px;width:1px;height:20px;background:#ececec"></div>
<div class="t" style="left:604.6px;top:304px;font-size:13px;color:#000;">1</div>
<svg style="left:617px;top:304px" width="12" height="12" viewBox="0 0 12 12"><rect x="0" y="0" width="12" height="12" fill="#fff"/><path d="M0.5 12 V0.5 H12" stroke="#808080" stroke-width="1" fill="none"/><path d="M1.5 11 V1.5 H11" stroke="#404040" stroke-width="1" fill="none"/><path d="M11.5 0 V11.5 H0" stroke="#d8d4cc" stroke-width="1" fill="none"/><path d="M10.5 1 V10.5 H1" stroke="#f4f2ee" stroke-width="1" fill="none"/></svg>
<svg style="left:638px;top:302px" width="10" height="16" viewBox="0 0 10 16"><path d="M7 1 L8 0 H10 V14 L8 16 H7 Z" fill="#d8b44a"/><rect x="7" y="1" width="1" height="14" fill="#f2dc80" shape-rendering="crispEdges"/><rect x="8" y="1" width="1" height="14" fill="#e0c058" shape-rendering="crispEdges"/><path d="M9.5 0.5 V14 L8 15.5" stroke="#9a7a20" stroke-width="1" fill="none"/><path d="M7.5 0.5 H9.5" stroke="#9a7a20" stroke-width="1"/><rect x="0" y="0" width="7" height="16" fill="#e41c1c"/><rect x="0.5" y="0.5" width="6.5" height="15" fill="none" stroke="#a01010" stroke-width="1"/><rect x="1.5" y="2" width="4.5" height="6" fill="#f6f6f6"/><rect x="1.5" y="3" width="4.5" height="1.6" fill="#1428e0"/><circle cx="3.6" cy="11.8" r="1.9" fill="#500"/><circle cx="3.6" cy="11.8" r="1.2" fill="#c8f4fa"/></svg>
<div class="t" style="left:666.5px;top:304px;font-size:13px;color:#000;">DS09.1</div>
<div class="t" style="left:737.5px;top:304px;font-size:13px;color:#000;">Planung</div>
<div style="left:832px;top:301px;width:59px;height:19px;background:#ffe08e"></div>
<div class="t" style="left:834.5px;top:304px;font-size:13px;color:#000;">aktiv</div>
<div style="left:603px;top:320px;width:289px;height:1px;background:#e6e6e6"></div>
<div style="left:613px;top:320px;width:1px;height:20px;background:#ececec"></div>
<div style="left:633px;top:320px;width:1px;height:20px;background:#ececec"></div>
<div style="left:663px;top:320px;width:1px;height:20px;background:#ececec"></div>
<div style="left:734px;top:320px;width:1px;height:20px;background:#ececec"></div>
<div style="left:831px;top:320px;width:1px;height:20px;background:#ececec"></div>
<div class="t" style="left:604.6px;top:324px;font-size:13px;color:#000;">2</div>
<svg style="left:617px;top:324px" width="12" height="12" viewBox="0 0 12 12"><rect x="0" y="0" width="12" height="12" fill="#fff"/><path d="M0.5 12 V0.5 H12" stroke="#808080" stroke-width="1" fill="none"/><path d="M1.5 11 V1.5 H11" stroke="#404040" stroke-width="1" fill="none"/><path d="M11.5 0 V11.5 H0" stroke="#d8d4cc" stroke-width="1" fill="none"/><path d="M10.5 1 V10.5 H1" stroke="#f4f2ee" stroke-width="1" fill="none"/></svg>
<svg style="left:638px;top:322px" width="10" height="16" viewBox="0 0 10 16"><path d="M7 1 L8 0 H10 V14 L8 16 H7 Z" fill="#d8b44a"/><rect x="7" y="1" width="1" height="14" fill="#f2dc80" shape-rendering="crispEdges"/><rect x="8" y="1" width="1" height="14" fill="#e0c058" shape-rendering="crispEdges"/><path d="M9.5 0.5 V14 L8 15.5" stroke="#9a7a20" stroke-width="1" fill="none"/><path d="M7.5 0.5 H9.5" stroke="#9a7a20" stroke-width="1"/><rect x="0" y="0" width="7" height="16" fill="#e41c1c"/><rect x="0.5" y="0.5" width="6.5" height="15" fill="none" stroke="#a01010" stroke-width="1"/><rect x="1.5" y="2" width="4.5" height="6" fill="#f6f6f6"/><rect x="1.5" y="3" width="4.5" height="1.6" fill="#1428e0"/><circle cx="3.6" cy="11.8" r="1.9" fill="#500"/><circle cx="3.6" cy="11.8" r="1.2" fill="#c8f4fa"/></svg>
<div class="t" style="left:666.5px;top:324px;font-size:13px;color:#000;">DS09.2</div>
<div class="t" style="left:737.5px;top:324px;font-size:13px;color:#000;">Customizing</div>
<div style="left:832px;top:321px;width:59px;height:19px;background:#ffe08e"></div>
<div class="t" style="left:834.5px;top:324px;font-size:13px;color:#000;">aktiv</div>
<div style="left:603px;top:340px;width:289px;height:1px;background:#e6e6e6"></div>
<div style="left:613px;top:340px;width:1px;height:20px;background:#ececec"></div>
<div style="left:633px;top:340px;width:1px;height:20px;background:#ececec"></div>
<div style="left:663px;top:340px;width:1px;height:20px;background:#ececec"></div>
<div style="left:734px;top:340px;width:1px;height:20px;background:#ececec"></div>
<div style="left:831px;top:340px;width:1px;height:20px;background:#ececec"></div>
<div class="t" style="left:604.6px;top:344px;font-size:13px;color:#000;">3</div>
<svg style="left:617px;top:344px" width="12" height="12" viewBox="0 0 12 12"><rect x="0" y="0" width="12" height="12" fill="#fff"/><path d="M0.5 12 V0.5 H12" stroke="#808080" stroke-width="1" fill="none"/><path d="M1.5 11 V1.5 H11" stroke="#404040" stroke-width="1" fill="none"/><path d="M11.5 0 V11.5 H0" stroke="#d8d4cc" stroke-width="1" fill="none"/><path d="M10.5 1 V10.5 H1" stroke="#f4f2ee" stroke-width="1" fill="none"/></svg>
<svg style="left:638px;top:342px" width="10" height="16" viewBox="0 0 10 16"><path d="M7 1 L8 0 H10 V14 L8 16 H7 Z" fill="#d8b44a"/><rect x="7" y="1" width="1" height="14" fill="#f2dc80" shape-rendering="crispEdges"/><rect x="8" y="1" width="1" height="14" fill="#e0c058" shape-rendering="crispEdges"/><path d="M9.5 0.5 V14 L8 15.5" stroke="#9a7a20" stroke-width="1" fill="none"/><path d="M7.5 0.5 H9.5" stroke="#9a7a20" stroke-width="1"/><rect x="0" y="0" width="7" height="16" fill="#e41c1c"/><rect x="0.5" y="0.5" width="6.5" height="15" fill="none" stroke="#a01010" stroke-width="1"/><rect x="1.5" y="2" width="4.5" height="6" fill="#f6f6f6"/><rect x="1.5" y="3" width="4.5" height="1.6" fill="#1428e0"/><circle cx="3.6" cy="11.8" r="1.9" fill="#500"/><circle cx="3.6" cy="11.8" r="1.2" fill="#c8f4fa"/></svg>
<div class="t" style="left:666.5px;top:344px;font-size:13px;color:#000;">DS09.3</div>
<div class="t" style="left:737.5px;top:344px;font-size:13px;color:#000;">Einführung</div>
<div style="left:832px;top:341px;width:59px;height:19px;background:#ffe08e"></div>
<div class="t" style="left:834.5px;top:344px;font-size:13px;color:#000;">aktiv</div>
<div class="t" style="left:466.4px;top:375px;font-size:13px;color:#000;">Vorgänge</div>
<div style="left:602px;top:373px;width:282px;height:67px;border:1px solid #8a9bab;background:#fff;"></div>
<div style="left:603px;top:374px;width:282px;height:25px;background:#e0e0dc"></div>
<div style="left:603px;top:374px;width:282px;height:1px;background:#fff"></div>
<div style="left:603px;top:374px;width:1px;height:25px;background:#fff"></div>
<div style="left:603px;top:399px;width:282px;height:1px;background:#8a9bab"></div>
<svg style="left:604px;top:376px" width="16" height="16" viewBox="0 0 16 16"><rect x="0.5" y="0.5" width="15" height="15" rx="2.5" ry="2.5" fill="none" stroke="#505050" stroke-width="1"/><rect x="3.5" y="3.5" width="9" height="9" fill="#fff" stroke="#444"/><rect x="3" y="3" width="10" height="2" fill="#444"/><path d="M5 6.5 H11 M5 8.5 H11 M5 10.5 H11" stroke="#444" stroke-width="1"/></svg>
<div class="t" style="left:635.5px;top:382px;font-size:13px;color:#000;">1 - 1 / 1</div>
<div style="left:693px;top:377px;width:82px;height:18px;border:1px solid #8a9bab;background:#fff;"></div>
<svg style="left:781px;top:376px" width="16" height="16" viewBox="0 0 16 16"><rect x="0.5" y="0.5" width="15" height="15" rx="2.5" ry="2.5" fill="none" stroke="#505050" stroke-width="1"/><circle cx="6.5" cy="6.5" r="3" fill="none" stroke="#383838" stroke-width="1"/><path d="M9 9 L12.5 12.5" stroke="#383838" stroke-width="2"/></svg>
<div style="left:604px;top:402px;width:9px;height:18px;background:#d5d1ca"></div>
<div style="left:614px;top:402px;width:19px;height:18px;background:#d5d1ca"></div>
<div style="left:634px;top:402px;width:29px;height:18px;background:#d5d1ca"></div>
<svg style="left:615px;top:403px" width="16" height="16" viewBox="0 0 16 16"><rect x="0.5" y="0.5" width="15" height="15" rx="2.5" ry="2.5" fill="none" stroke="#505050" stroke-width="1"/><path d="M4 7.5 L7 11 L12 5" stroke="#505050" stroke-width="2.2" fill="none"/></svg>
<div style="left:664px;top:402px;width:123px;height:18px;background:#d5d1ca"></div>
<div class="t" style="left:665px;top:405px;font-size:13px;color:#000;">Vorgangsnummer</div>
<svg style="left:775px;top:405px" width="9" height="13" viewBox="0 0 9 13"><path d="M4.5 0.6 L8.5 5.5 H0.5 Z" fill="#18a0ff" stroke="#505050" stroke-width="0.9" stroke-linejoin="round"/><path d="M4.5 12.4 L8.5 7.5 H0.5 Z" fill="#fff" stroke="#505050" stroke-width="0.9" stroke-linejoin="round"/></svg>
<div style="left:788px;top:402px;width:96px;height:18px;background:#d5d1ca"></div>
<div class="t" style="left:789px;top:405px;font-size:13px;color:#000;">Bezeichnung</div>
<svg style="left:872px;top:405px" width="9" height="13" viewBox="0 0 9 13"><path d="M4.5 0.6 L8.5 5.5 H0.5 Z" fill="#fff" stroke="#505050" stroke-width="0.9" stroke-linejoin="round"/><path d="M4.5 12.4 L8.5 7.5 H0.5 Z" fill="#fff" stroke="#505050" stroke-width="0.9" stroke-linejoin="round"/></svg>
<div style="left:613px;top:420px;width:1px;height:20px;background:#ececec"></div>
<div style="left:633px;top:420px;width:1px;height:20px;background:#ececec"></div>
<div style="left:663px;top:420px;width:1px;height:20px;background:#ececec"></div>
<div style="left:787px;top:420px;width:1px;height:20px;background:#ececec"></div>
<div class="t" style="left:604.6px;top:424px;font-size:13px;color:#000;">1</div>
<svg style="left:617px;top:424px" width="12" height="12" viewBox="0 0 12 12"><rect x="0" y="0" width="12" height="12" fill="#fff"/><path d="M0.5 12 V0.5 H12" stroke="#808080" stroke-width="1" fill="none"/><path d="M1.5 11 V1.5 H11" stroke="#404040" stroke-width="1" fill="none"/><path d="M11.5 0 V11.5 H0" stroke="#d8d4cc" stroke-width="1" fill="none"/><path d="M10.5 1 V10.5 H1" stroke="#f4f2ee" stroke-width="1" fill="none"/></svg>
<svg style="left:635px;top:422px" width="16" height="16" viewBox="0 0 16 16"><rect x="1.5" y="2.5" width="13" height="13" fill="#f2eedc" stroke="#8a7c50"/><rect x="5" y="0.5" width="6" height="3" rx="1" fill="#b8d0f0" stroke="#4a6a9a" stroke-width="0.8"/><circle cx="5.5" cy="8" r="1.7" fill="#2a78c8"/><circle cx="10.5" cy="8" r="1.7" fill="#2a78c8"/><path d="M3 14 Q3 10.5 5.5 10.5 Q8 10.5 8 14 M8 14 Q8 10.5 10.5 10.5 Q13 10.5 13 14" fill="#3a88d8" stroke="#2060a0" stroke-width="0.6"/></svg>
<div class="t" style="left:666.5px;top:424px;font-size:13px;color:#000;">DS09-1</div>
<div class="t" style="left:790.5px;top:424px;font-size:13px;color:#000;">Projektleitung</div>
<div class="t" style="left:466.4px;top:455px;font-size:13px;color:#000;">Meilensteine</div>
<div style="left:602px;top:453px;width:107px;height:18px;border:1px solid #8a9bab;background:#fff;"></div>
<svg style="left:604px;top:455px" width="16" height="16" viewBox="0 0 16 16"><rect x="0.5" y="0.5" width="15" height="15" rx="2.5" ry="2.5" fill="none" stroke="#505050" stroke-width="1"/><rect x="3.5" y="3.5" width="9" height="9" fill="#fff" stroke="#444"/><rect x="3" y="3" width="10" height="2" fill="#444"/><path d="M5 6.5 H11 M5 8.5 H11 M5 10.5 H11" stroke="#444" stroke-width="1"/></svg>
<div class="t" style="left:623.9px;top:457px;font-size:13px;color:#000;">Keine Einträge</div>
<div class="t" style="left:466.4px;top:486px;font-size:13px;color:#000;">Fertigstellung</div>
<div style="left:602px;top:484px;width:232px;height:67px;border:1px solid #8a9bab;background:#fff;"></div>
<div style="left:603px;top:485px;width:232px;height:25px;background:#e0e0dc"></div>
<div style="left:603px;top:485px;width:232px;height:1px;background:#fff"></div>
<div style="left:603px;top:485px;width:1px;height:25px;background:#fff"></div>
<div style="left:603px;top:510px;width:232px;height:1px;background:#8a9bab"></div>
<svg style="left:604px;top:487px" width="16" height="16" viewBox="0 0 16 16"><rect x="0.5" y="0.5" width="15" height="15" rx="2.5" ry="2.5" fill="none" stroke="#505050" stroke-width="1"/><rect x="3.5" y="3.5" width="9" height="9" fill="#fff" stroke="#444"/><rect x="3" y="3" width="10" height="2" fill="#444"/><path d="M5 6.5 H11 M5 8.5 H11 M5 10.5 H11" stroke="#444" stroke-width="1"/></svg>
<div class="t" style="left:635.5px;top:493px;font-size:13px;color:#000;">1 - 1 / 1</div>
<div style="left:693px;top:488px;width:82px;height:18px;border:1px solid #8a9bab;background:#fff;"></div>
<svg style="left:781px;top:487px" width="16" height="16" viewBox="0 0 16 16"><rect x="0.5" y="0.5" width="15" height="15" rx="2.5" ry="2.5" fill="none" stroke="#505050" stroke-width="1"/><circle cx="6.5" cy="6.5" r="3" fill="none" stroke="#383838" stroke-width="1"/><path d="M9 9 L12.5 12.5" stroke="#383838" stroke-width="2"/></svg>
<div style="left:604px;top:513px;width:9px;height:18px;background:#d5d1ca"></div>
<div style="left:614px;top:513px;width:19px;height:18px;background:#d5d1ca"></div>
<div style="left:634px;top:513px;width:29px;height:18px;background:#d5d1ca"></div>
<svg style="left:615px;top:514px" width="16" height="16" viewBox="0 0 16 16"><rect x="0.5" y="0.5" width="15" height="15" rx="2.5" ry="2.5" fill="none" stroke="#505050" stroke-width="1"/><path d="M4 7.5 L7 11 L12 5" stroke="#505050" stroke-width="2.2" fill="none"/></svg>
<div style="left:664px;top:513px;width:70px;height:18px;background:#d5d1ca"></div>
<div class="t" style="left:665px;top:516px;font-size:13px;color:#000;">Nummer</div>
<svg style="left:722px;top:516px" width="9" height="13" viewBox="0 0 9 13"><path d="M4.5 0.6 L8.5 5.5 H0.5 Z" fill="#18a0ff" stroke="#505050" stroke-width="0.9" stroke-linejoin="round"/><path d="M4.5 12.4 L8.5 7.5 H0.5 Z" fill="#fff" stroke="#505050" stroke-width="0.9" stroke-linejoin="round"/></svg>
<div style="left:735px;top:513px;width:99px;height:18px;background:#d5d1ca"></div>
<div class="t" style="left:736px;top:516px;font-size:13px;color:#000;">Fertigstellung</div>
<svg style="left:822px;top:516px" width="9" height="13" viewBox="0 0 9 13"><path d="M4.5 0.6 L8.5 5.5 H0.5 Z" fill="#fff" stroke="#505050" stroke-width="0.9" stroke-linejoin="round"/><path d="M4.5 12.4 L8.5 7.5 H0.5 Z" fill="#fff" stroke="#505050" stroke-width="0.9" stroke-linejoin="round"/></svg>
<div style="left:613px;top:531px;width:1px;height:20px;background:#ececec"></div>
<div style="left:633px;top:531px;width:1px;height:20px;background:#ececec"></div>
<div style="left:663px;top:531px;width:1px;height:20px;background:#ececec"></div>
<div style="left:734px;top:531px;width:1px;height:20px;background:#ececec"></div>
<div class="t" style="left:604.6px;top:535px;font-size:13px;color:#000;">1</div>
<svg style="left:617px;top:535px" width="12" height="12" viewBox="0 0 12 12"><rect x="0" y="0" width="12" height="12" fill="#fff"/><path d="M0.5 12 V0.5 H12" stroke="#808080" stroke-width="1" fill="none"/><path d="M1.5 11 V1.5 H11" stroke="#404040" stroke-width="1" fill="none"/><path d="M11.5 0 V11.5 H0" stroke="#d8d4cc" stroke-width="1" fill="none"/><path d="M10.5 1 V10.5 H1" stroke="#f4f2ee" stroke-width="1" fill="none"/></svg>
<div class="t" style="left:635px;top:533.5px;font-size:17.5px;font-weight:bold;">%</div>
<div class="t" style="left:666.5px;top:535px;font-size:13px;color:#000;">DS09-A</div>
<div class="t" style="right:309px;top:535px;font-size:13px;color:#000;">75,00</div>
<div style="left:563px;top:95px;width:4px;height:1px;background:#000"></div>
<div style="left:562px;top:94px;width:1px;height:1px;background:#000"></div>
<div style="left:528px;top:78px;width:111px;height:15px;border:1px solid #000;background:#ffffe1;"></div>
<div class="t" style="left:531px;top:82px;font-size:10.6px;color:#000;">in Ablage übernehmen</div>
<svg style="left:527px;top:60px" width="17" height="22" viewBox="0 0 17 22"><path d="M5 1h2v1h-2zM5 2h2v1h-2zM5 3h2v1h-2zM5 4h2v1h-2zM5 5h2v1h-2zM5 6h2v1h-2zM8 6h2v1h-2zM5 7h2v1h-2zM8 7h2v1h-2zM11 7h2v1h-2zM5 8h2v1h-2zM8 8h2v1h-2zM11 8h2v1h-2zM14 8h2v1h-2zM5 9h2v1h-2zM8 9h2v1h-2zM11 9h2v1h-2zM14 9h2v1h-2zM1 10h2v1h-2zM5 10h11v1h-11zM1 11h3v1h-3zM5 11h11v1h-11zM2 12h13v1h-13zM3 13h12v1h-12zM3 14h12v1h-12zM4 15h11v1h-11zM4 16h10v1h-10zM5 17h9v1h-9zM5 18h9v1h-9zM6 19h8v1h-8zM6 20h8v1h-8z" fill="#fff" shape-rendering="crispEdges"/><path d="M5 0h2v1h-2zM4 1h1v1h-1zM7 1h1v1h-1zM4 2h1v1h-1zM7 2h1v1h-1zM4 3h1v1h-1zM7 3h1v1h-1zM4 4h1v1h-1zM7 4h1v1h-1zM4 5h1v1h-1zM7 5h3v1h-3zM4 6h1v1h-1zM7 6h1v1h-1zM10 6h3v1h-3zM4 7h1v1h-1zM7 7h1v1h-1zM10 7h1v1h-1zM13 7h3v1h-3zM4 8h1v1h-1zM7 8h1v1h-1zM10 8h1v1h-1zM13 8h1v1h-1zM16 8h1v1h-1zM1 9h2v1h-2zM4 9h1v1h-1zM7 9h1v1h-1zM10 9h1v1h-1zM13 9h1v1h-1zM16 9h1v1h-1zM0 10h1v1h-1zM3 10h2v1h-2zM16 10h1v1h-1zM0 11h1v1h-1zM4 11h1v1h-1zM16 11h1v1h-1zM1 12h1v1h-1zM15 12h1v1h-1zM2 13h1v1h-1zM15 13h1v1h-1zM2 14h1v1h-1zM15 14h1v1h-1zM3 15h1v1h-1zM15 15h1v1h-1zM3 16h1v1h-1zM14 16h1v1h-1zM4 17h1v1h-1zM14 17h1v1h-1zM4 18h1v1h-1zM14 18h1v1h-1zM5 19h1v1h-1zM14 19h1v1h-1zM5 20h1v1h-1zM14 20h1v1h-1zM5 21h10v1h-10z" fill="#000" shape-rendering="crispEdges"/></svg>
</body></html>
